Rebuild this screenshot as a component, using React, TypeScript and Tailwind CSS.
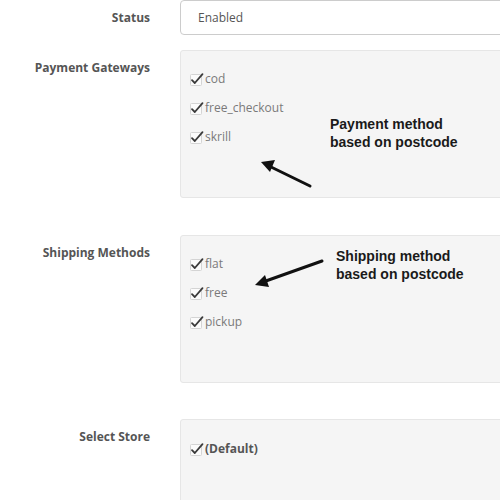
import React from "react";

function Check() {
  return (
    <svg width="14" height="14" viewBox="0 0 14 14" className="shrink-0">
      <rect x="0.5" y="2.5" width="11" height="11" rx="1" fill="#fbfbfb" stroke="#d4d4d4" />
      <path d="M2 8.2 L4.8 11 L12.5 2.2" fill="none" stroke="#3a3a3a" strokeWidth="1.8" strokeLinecap="round" strokeLinejoin="round" />
    </svg>
  );
}

function Item({ label, bold }: { label: string; bold?: boolean }) {
  return (
    <div className="flex h-[29px] items-center">
      <Check />
      <span className={"ml-[1px] text-[12px] leading-none " + (bold ? "font-bold text-[#555]" : "text-[#7a7a7a]")}>{label}</span>
    </div>
  );
}

function Label({ children }: { children: React.ReactNode }) {
  return (
    <div className="w-[150px] shrink-0 text-right text-[12px] font-bold text-[#555] pt-[9px] leading-[17px]">
      {children}
    </div>
  );
}

export default function App() {
  return (
    <div
      className="relative w-[500px] h-[500px] overflow-hidden bg-white"
      style={{ fontFamily: '"Open Sans", "Noto Sans", sans-serif' }}
    >
      <div className="flex w-[600px]">
        <div className="w-[150px] shrink-0 text-right text-[12px] font-bold text-[#555] h-[35px] flex items-center justify-end">
          Status
        </div>
        <div className="ml-[30px] w-[400px] shrink-0 h-[35px] border border-[#ccc] rounded-[4px] flex items-center pl-[17px] text-[12px] text-[#555]">
          Enabled
        </div>
      </div>

      <div className="flex w-[600px] mt-[15px]">
        <Label>Payment Gateways</Label>
        <div className="ml-[30px] w-[400px] shrink-0 h-[148px] bg-[#f5f5f5] border border-[#e6e6e6] rounded-[3px] pt-[13px] pl-[9px]">
          <Item label="cod" />
          <Item label="free_checkout" />
          <Item label="skrill" />
        </div>
      </div>

      <div className="flex w-[600px] mt-[37px]">
        <Label>Shipping Methods</Label>
        <div className="ml-[30px] w-[400px] shrink-0 h-[148px] bg-[#f5f5f5] border border-[#e6e6e6] rounded-[3px] pt-[13px] pl-[9px]">
          <Item label="flat" />
          <Item label="free" />
          <Item label="pickup" />
        </div>
      </div>

      <div className="flex w-[600px] mt-[36px]">
        <Label>Select Store</Label>
        <div className="ml-[30px] w-[400px] shrink-0 h-[148px] bg-[#f5f5f5] border border-[#e6e6e6] rounded-[3px] pt-[14px] pl-[9px]">
          <Item label="(Default)" bold />
        </div>
      </div>

      <div
        className="absolute left-[330px] top-[115px] text-[14px] font-bold leading-[18px] text-[#1a1a1a]"
        style={{ fontFamily: '"Liberation Sans", Arial, sans-serif' }}
      >
        Payment method
        <br />
        based on postcode
      </div>
      <div
        className="absolute left-[336px] top-[247px] text-[14px] font-bold leading-[18px] text-[#1a1a1a]"
        style={{ fontFamily: '"Liberation Sans", Arial, sans-serif' }}
      >
        Shipping method
        <br />
        based on postcode
      </div>

      <svg className="absolute left-0 top-0 pointer-events-none" width="500" height="500">
        <line x1="310" y1="186" x2="269" y2="166" stroke="#111" strokeWidth="3" strokeLinecap="round" />
        <polygon points="261,162 275,160 270,172" fill="#111" />
        <line x1="322" y1="261" x2="263" y2="282" stroke="#111" strokeWidth="3" strokeLinecap="round" />
        <polygon points="255,285 265,275 269,287" fill="#111" />
      </svg>
    </div>
  );
}
